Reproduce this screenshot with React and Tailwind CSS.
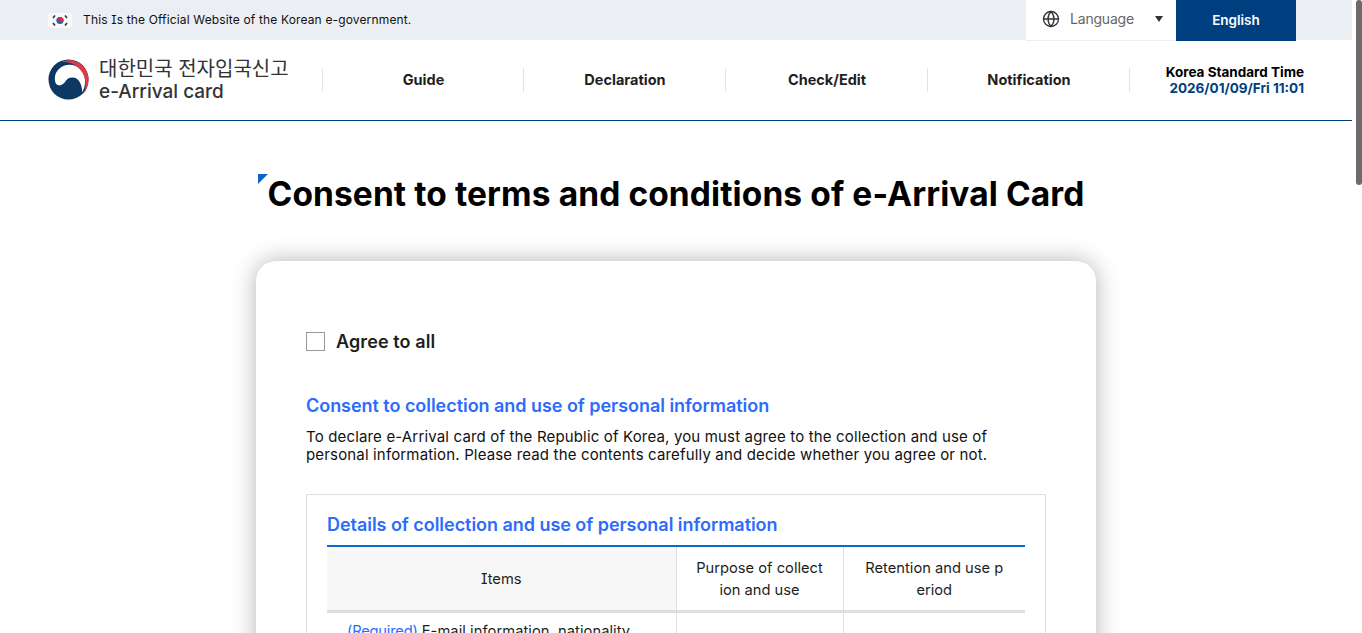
import { Globe } from 'lucide-react';

const NAV = ['Guide', 'Declaration', 'Check/Edit', 'Notification'];

function Flag() {
  return (
    <svg width="24" height="15" viewBox="0 0 24 15" className="shrink-0">
      <rect width="24" height="15" rx="1.500" fill="#fafafa" />
      <circle cx="12" cy="7.500" r="3.600" fill="#2f5fb3" />
      <path d="M8.400 7.500a3.600 3.600 0 0 1 7.200 0a1.800 1.800 0 0 1-3.600 0a1.800 1.800 0 0 0-3.600 0z" fill="#d8303f" />
      <g stroke="#333" strokeWidth="1.600">
        <path d="M5 5l2-2.600M17 2.400l2 2.600M5 10l2 2.600M17 12.600l2-2.600" />
      </g>
    </svg>
  );
}

function Logo() {
  return (
    <svg width="41" height="41" viewBox="0 0 42 42" className="shrink-0">
      <circle cx="21" cy="21" r="20.500" fill="#0c3862" />
      <path d="M7 20C7 12 14 6 22 6c9 0 16 7 16 16 0 5-1 9-3 12 0-7-3-15-10-15-4 0-6 2-8 5-2 2-4 3-5.500 3C8.500 27 7 24 7 20z" fill="#fff" />
      <path d="M13 3.500C25-3 41.500 6 41.500 21c0 5-1.500 10-4.500 14 1.500-5 1.500-9 1-13C37 12 26 1 13 3.500z" fill="#e0394a" />
    </svg>
  );
}

export default function App() {
  return (
    <div className="flex h-[633px] overflow-hidden bg-white font-['Inter','Noto_Sans_CJK_KR',sans-serif] text-[#1e1e1e] [font-feature-settings:'cv08']">
      <div className="w-[1352px] shrink-0">
        {/* top strip */}
        <div className="flex h-10 items-center bg-[#ebeff4] pl-12">
          <Flag />
          <span className="ml-[11px] text-[12px] tracking-[0.15px] text-[#111]">This Is the Official Website of the Korean e-government.</span>
          <div className="ml-auto mr-14 flex h-[41px] self-start">
            <div className="flex w-[150px] items-center border-b border-[#ebeff4] bg-white pb-[2px] pl-4">
              <Globe size={18} strokeWidth={1.8} className="text-[#333]" />
              <span className="mb-[2px] ml-[10px] text-[14px] tracking-[-0.2px] text-[#666]">Language</span>
              <span className="ml-[21px] h-0 w-0 border-x-[4.500px] border-t-[6px] border-x-transparent border-t-[#333]"></span>
            </div>
            <div className="flex w-[120px] items-center justify-center bg-[#003f7f] pb-[1px] text-[13.500px] font-semibold text-white">English</div>
          </div>
        </div>

        {/* header */}
        <header className="flex h-[81px] items-center border-b border-[#003f7f] px-12 pb-[1px]">
          <div className="flex w-[274px] items-center">
            <Logo />
            <div className="ml-[10px] pt-[2px] text-[#333]">
              <div className="text-[20px] leading-[23px]">대한민국 전자입국신고</div>
              <div className="text-[19px] font-medium leading-[22px]">e-Arrival card</div>
            </div>
          </div>
          <nav className="flex border-l border-[#e3e3e3]">
            {NAV.map((item) => (
              <div key={item} className="flex h-[24px] w-[202px] items-center justify-center border-r border-[#e3e3e3] pl-[1px] text-[14.500px] font-bold first:w-[201px]">
                {item}
              </div>
            ))}
          </nav>
          <div className="ml-auto text-right text-[13.500px] font-bold leading-[16px]">
            <div className="text-black">Korea Standard Time</div>
            <div className="text-[#003f7f]">2026/01/09/Fri 11:01</div>
          </div>
        </header>

        <main className="pt-[50px]">
          <div className="text-center">
            <h1 className="relative inline-block text-[33.500px] font-bold leading-[46px] tracking-[0.1px] text-black">
              <span className="absolute -left-[10px] top-[3px] h-0 w-0 border-t-[10px] border-r-[10px] border-t-[#0b63ce] border-r-transparent"></span>
              Consent to terms and conditions of e-Arrival Card
            </h1>
          </div>

          <div className="mx-auto mt-[44px] w-[840px] rounded-[20px] bg-white px-[50px] pb-10 pt-[71px] shadow-[0_0_24px_rgba(0,0,0,0.3)]">
            <label className="flex h-5 items-start">
              <span className="h-[19px] w-[19px] border border-[#999] bg-white"></span>
              <span className="ml-[11px] text-[18px] font-semibold leading-5 tracking-[0.1px]">Agree to all</span>
            </label>

            <h2 className="mt-[42px] text-[18px] font-semibold leading-6 tracking-[-0.04px] text-[#2d6bfa]">Consent to collection and use of personal information</h2>
            <p className="mt-[10px] text-[15px] leading-[18px] tracking-[0.16px] text-[#111]">
              To declare e-Arrival card of the Republic of Korea, you must agree to the collection and use of personal information. Please read the contents carefully and decide whether you agree or not.
            </p>

            <div className="mt-[30px] border border-[#dedede] px-5 pt-[18px]">
              <h3 className="pb-[8px] text-[18px] font-semibold leading-6 tracking-[-0.04px] text-[#2d6bfa]">Details of collection and use of personal information</h3>
              <table className="w-[698px] table-fixed border-t-2 border-[#0b6bcb] text-center text-[14.700px] leading-[22px]">
                <colgroup>
                  <col className="w-[349px]" />
                  <col className="w-[167px]" />
                  <col className="w-[182px]" />
                </colgroup>
                <thead>
                  <tr className="border-b-[3px] border-[#dedede]">
                    <th className="h-[65px] border-r border-[#dedede] bg-[#f7f7f7] pt-[2px] font-normal">Items</th>
                    <th className="break-all border-r border-[#dedede] px-[19px] pt-[2px] font-normal">Purpose of collection and use</th>
                    <th className="break-all px-5 pt-[2px] font-normal">Retention and use period</th>
                  </tr>
                </thead>
                <tbody>
                  <tr>
                    <td className="border-r border-[#dedede] px-5 pt-[7px] text-left">
                      <span className="tracking-[-0.2px] text-[#2d6bfa]">(Required)</span> <span className="tracking-[0.06px]">E-mail information, nationality, passport number, name</span>
                    </td>
                    <td className="border-r border-[#dedede]"></td>
                    <td></td>
                  </tr>
                </tbody>
              </table>
            </div>
          </div>
        </main>
      </div>

      {/* scrollbar */}
      <div className="w-[10px] shrink-0 bg-white pl-[4px]">
        <div className="h-[185px] w-[6px] rounded-[3px] bg-[#6b6b6b]"></div>
      </div>
    </div>
  );
}
